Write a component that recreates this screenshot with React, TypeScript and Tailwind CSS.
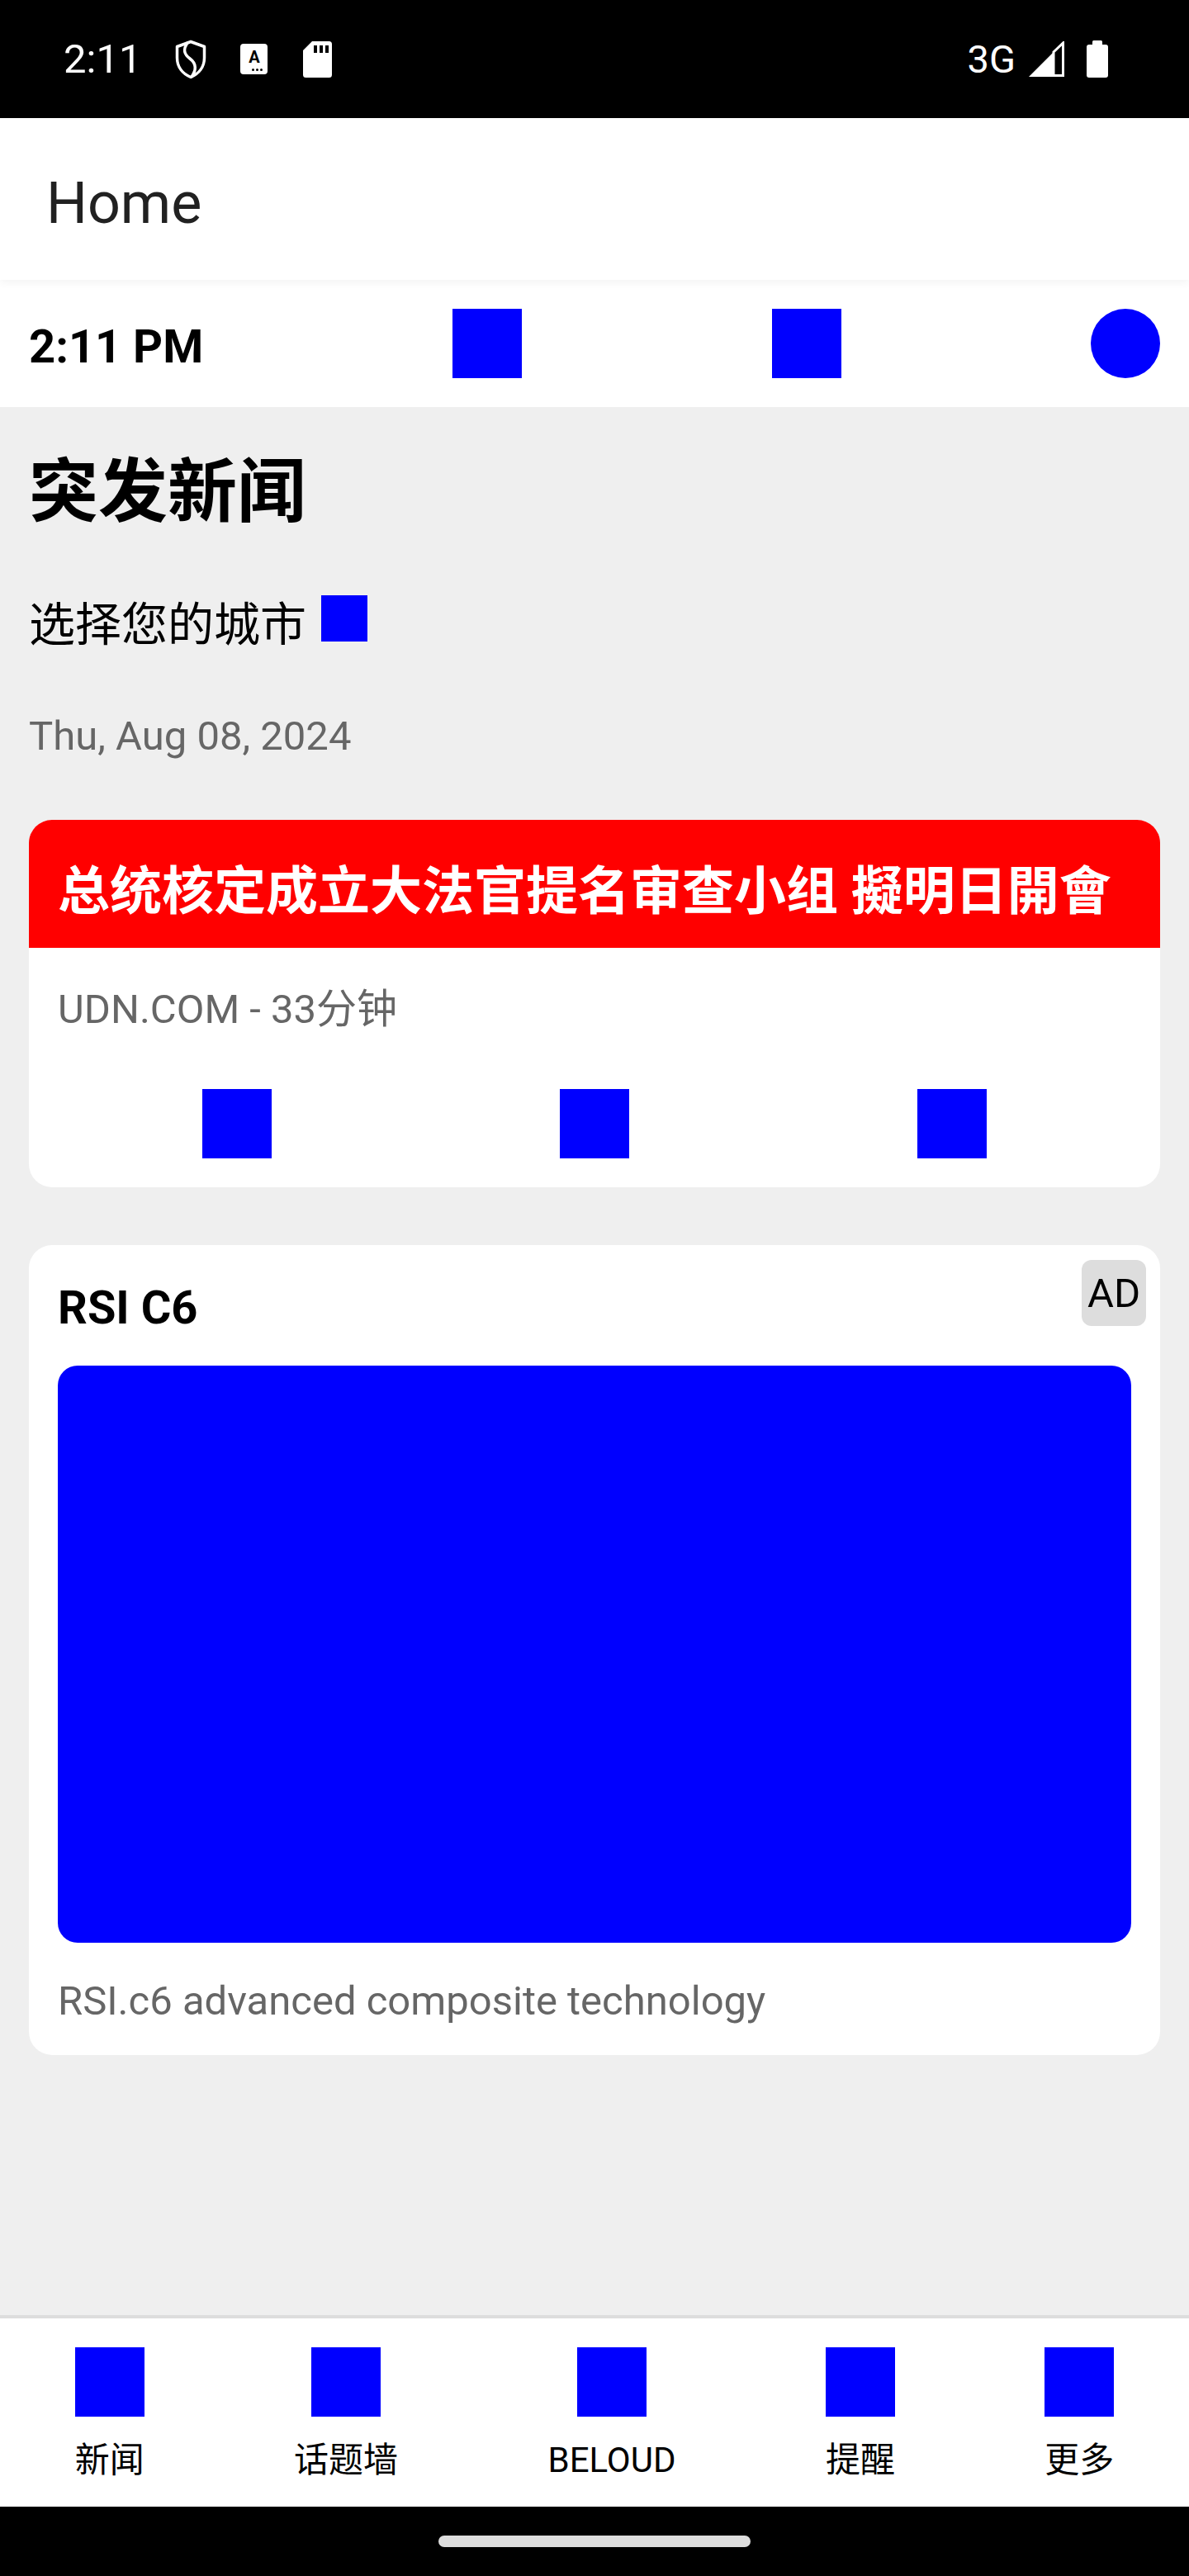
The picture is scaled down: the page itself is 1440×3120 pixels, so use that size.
import React from "react";

const FONT = "[font-family:Roboto,'Noto_Sans_CJK_SC',sans-serif]";

function StatusBar() {
  return (
    <div className="h-[143px] bg-black flex items-center justify-between text-white">
      <div className="flex items-center pl-[77px]">
        <span className="text-[49px] leading-none">2:11</span>
        {/* shield */}
        <svg className="ml-[40px]" width="40" height="48" viewBox="0 0 40 48" fill="none">
          <path
            d="M20 2.5 L36.5 8.5 V22 C36.5 33.5 29.5 41.5 20 45.5 C10.5 41.5 3.5 33.5 3.5 22 V8.5 Z"
            stroke="white"
            strokeWidth="3.5"
            strokeLinejoin="round"
          />
          <path
            d="M16 4 C11 11 11 17 19 23 C27 29 27 37 21 45"
            stroke="white"
            strokeWidth="3.5"
            strokeLinecap="round"
          />
        </svg>
        {/* keyboard A badge */}
        <div className="ml-[40px] w-[33px] h-[37px] bg-white rounded-[4px] flex flex-col items-center pt-[6px]">
          <span className="text-black text-[20px] font-bold leading-none">A</span>
          <div className="flex gap-[2px] self-end mr-[6px] mt-[4px]">
            <span className="w-[3px] h-[3px] rounded-full bg-black" />
            <span className="w-[3px] h-[3px] rounded-full bg-black" />
            <span className="w-[3px] h-[3px] rounded-full bg-black" />
          </div>
        </div>
        {/* sd card */}
        <svg className="ml-[43px]" width="35" height="44" viewBox="0 0 35 44">
          <path
            d="M11 0 H31.5 a3.5 3.5 0 0 1 3.5 3.5 V40.5 a3.5 3.5 0 0 1 -3.5 3.5 H3.5 a3.5 3.5 0 0 1 -3.5 -3.5 V11 Z"
            fill="white"
          />
          <rect x="13" y="5" width="4" height="9" fill="black" />
          <rect x="20" y="5" width="4" height="9" fill="black" />
          <rect x="27" y="5" width="4" height="9" fill="black" />
        </svg>
      </div>
      <div className="flex items-center pr-[98px]">
        <span className="text-[47px] leading-none">3G</span>
        <svg className="ml-[16px]" width="43" height="43" viewBox="0 0 43 43">
          <polygon points="0,43 30,43 30,13" fill="white" />
          <polygon
            points="30,13 41.5,2 41.5,41.5 30,41.5"
            fill="none"
            stroke="white"
            strokeWidth="3"
            strokeLinejoin="miter"
          />
        </svg>
        <svg className="ml-[27px]" width="26" height="45" viewBox="0 0 26 45">
          <rect x="7" y="0" width="12" height="7" rx="1.5" fill="white" />
          <rect x="0" y="5" width="26" height="40" rx="3" fill="white" />
        </svg>
      </div>
    </div>
  );
}

function BlueSquare({ size = "w-[84px] h-[84px]" }: { size?: string }) {
  return <div className={`${size} bg-[#0000ff] shrink-0`} />;
}

const navItems = ["新闻", "话题墙", "BELOUD", "提醒", "更多"];

export default function App() {
  return (
    <div className={`w-[1440px] h-[3120px] flex flex-col bg-[#efefef] ${FONT}`}>
      <StatusBar />

      {/* App bar */}
      <div className="relative z-10 h-[196px] bg-white px-[56px] pt-[68px] shadow-[0_3px_10px_rgba(0,0,0,0.05)]">
        <h1 className="text-[70px] leading-none text-[#212121]">Home</h1>
      </div>

      {/* Time bar */}
      <div className="h-[154px] bg-white px-[35px] flex items-center justify-between">
        <span className="mt-[8px] text-[56px] leading-none font-bold text-black">2:11 PM</span>
        <BlueSquare />
        <BlueSquare />
        <div className="w-[84px] h-[84px] rounded-full bg-[#0000ff]" />
      </div>

      {/* Content */}
      <main className="flex-1 px-[35px]">
        <h2 className="mt-[62px] text-[84px] leading-none font-bold text-black">突发新闻</h2>

        <div className="mt-[82px] flex items-start">
          <span className="mt-[8px] text-[56px] leading-none text-black">选择您的城市</span>
          <BlueSquare size="w-[56px] h-[56px] ml-[18px]" />
        </div>

        <p className="mt-[82px] text-[49px] leading-none text-[#666666]">Thu, Aug 08, 2024</p>

        {/* News card */}
        <div className="mt-[77px] bg-white rounded-[28px] overflow-hidden">
          <div className="h-[155px] bg-[#ff0000] px-[35px] pt-[55px]">
            <p className="text-[63px] leading-none font-bold text-white whitespace-nowrap">
              总统核定成立大法官提名审查小组 擬明日開會
            </p>
          </div>
          <div className="px-[35px] pb-[35px]">
            <p className="mt-[50px] text-[49px] leading-none text-[#666666]">UDN.COM - 33分钟</p>
            <div className="mt-[72px] grid grid-cols-3">
              <div className="flex justify-center">
                <BlueSquare />
              </div>
              <div className="flex justify-center">
                <BlueSquare />
              </div>
              <div className="flex justify-center">
                <BlueSquare />
              </div>
            </div>
          </div>
        </div>

        {/* Ad card */}
        <div className="relative mt-[70px] bg-white rounded-[28px] px-[35px] pt-[48px] pb-[41px]">
          <div className="absolute top-[18px] right-[17px] w-[78px] h-[80px] rounded-[12px] bg-[#dddddd] flex items-center justify-center">
            <span className="text-[49px] leading-none text-black">AD</span>
          </div>
          <p className="text-[56px] leading-none font-bold text-black">RSI C6</p>
          <div className="mt-[42px] h-[699px] rounded-[24px] bg-[#0000ff]" />
          <p className="mt-[46px] text-[49px] leading-none text-[#666666]">
            RSI.c6 advanced composite technology
          </p>
        </div>
      </main>

      {/* Bottom navigation */}
      <nav className="h-[232px] bg-white border-t-4 border-[#dddddd] pt-[35px] flex justify-around">
        {navItems.map((label) => (
          <div key={label} className="flex flex-col items-center">
            <BlueSquare />
            <span className="mt-[32px] text-[42px] leading-none text-black">{label}</span>
          </div>
        ))}
      </nav>

      {/* Gesture bar */}
      <div className="h-[84px] bg-black flex items-center justify-center">
        <div className="w-[378px] h-[14px] rounded-full bg-[#dddddd]" />
      </div>
    </div>
  );
}
